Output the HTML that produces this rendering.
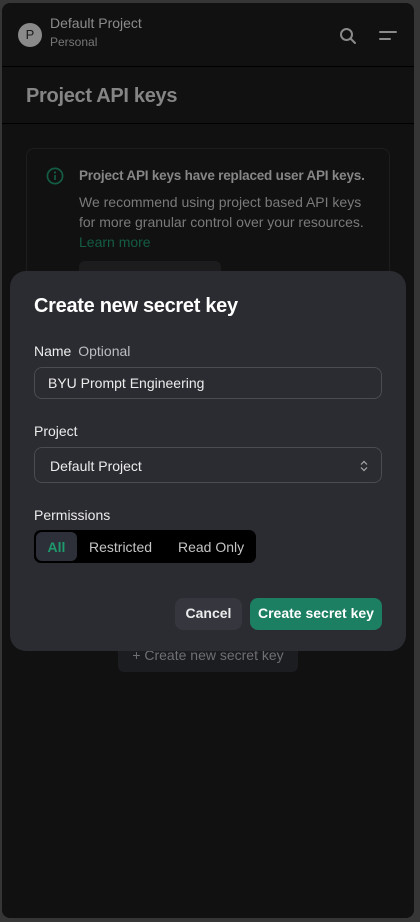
<!DOCTYPE html>
<html><head><style>
*{box-sizing:border-box;margin:0;padding:0}
body{width:420px;height:922px;background:#363636;font-family:"Liberation Sans",sans-serif;position:relative;overflow:hidden}
.panel{position:absolute;left:2px;top:3px;width:412px;height:915px;background:#111112;border-radius:8px;overflow:hidden}
.abs{position:absolute}
</style></head><body>
<div class="panel">
  <div class="abs" style="left:16px;top:20px;width:24px;height:24px;border-radius:50%;background:#8a8a8a;color:#1a1a1a;font-size:13px;text-align:center;line-height:24px">P</div>
  <div class="abs" style="left:48px;top:12px;color:#8c8c8c;font-size:14px">Default Project</div>
  <div class="abs" style="left:48px;top:32px;color:#777;font-size:12px">Personal</div>
  <svg class="abs" style="left:337px;top:24px" width="18" height="18" viewBox="0 0 18 18"><circle cx="7.5" cy="7.5" r="5.5" fill="none" stroke="#8a8a8a" stroke-width="2"/><path d="M11.5 11.5L16 16" stroke="#8a8a8a" stroke-width="2" stroke-linecap="round"/></svg>
  <svg class="abs" style="left:377px;top:26px" width="18" height="14" viewBox="0 0 18 14"><path d="M1 3H17M1 10H11" stroke="#8a8a8a" stroke-width="2" stroke-linecap="round"/></svg>
  <div class="abs" style="left:0;top:63px;width:412px;height:1px;background:#000"></div>
  <div class="abs" style="left:24px;top:82px;color:#858585;font-size:20px;font-weight:bold;letter-spacing:-0.3px">Project API keys</div>
  <div class="abs" style="left:0;top:120px;width:412px;height:1px;background:#000"></div>
  <div class="abs" style="left:24px;top:145px;width:364px;height:140px;border:1px solid #1e1e1e;border-radius:8px"></div>
  <svg class="abs" style="left:44px;top:164px" width="18" height="18" viewBox="0 0 18 18"><circle cx="9" cy="9" r="7.6" fill="none" stroke="#145c43" stroke-width="1.7"/><path d="M9 8v5" stroke="#145c43" stroke-width="1.7"/><circle cx="9" cy="5.5" r="1.1" fill="#145c43"/></svg>
  <div class="abs" style="left:77px;top:165px;color:#868686;font-size:13.5px;font-weight:bold;letter-spacing:-0.2px">Project API keys have replaced user API keys.</div>
  <div class="abs" style="left:77px;top:189px;color:#7a7a7a;font-size:14px;line-height:20px;width:300px">We recommend using project based API keys for more granular control over your resources.<br><span style="color:#145c43">Learn more</span></div>
  <div class="abs" style="left:77px;top:258px;width:142px;height:20px;background:#1c1c1f;border-radius:6px"></div>
  <div class="abs" style="left:116px;top:637px;width:180px;height:32px;background:#1c1d21;border-radius:6px;color:#6f6f74;font-size:14px;line-height:30px;text-align:center">+ Create new secret key</div>
  <div class="abs" style="left:8px;top:268px;width:396px;height:380px;background:#2b2c31;border-radius:16px">
    <div class="abs" style="left:24px;top:24px;color:#fff;font-size:20px;font-weight:bold;letter-spacing:-0.3px">Create new secret key</div>
    <div class="abs" style="left:24px;top:72px;color:#ececec;font-size:14px">Name <span style="color:#bdbdc2;margin-left:3px">Optional</span></div>
    <div class="abs" style="left:24px;top:96px;width:348px;height:32px;border:1px solid #4a4b53;border-radius:8px;color:#ececec;font-size:14px;line-height:30px;padding-left:13px">BYU Prompt Engineering</div>
    <div class="abs" style="left:24px;top:152px;color:#ececec;font-size:14px">Project</div>
    <div class="abs" style="left:24px;top:176px;width:348px;height:36px;border:1px solid #4a4b53;border-radius:8px;color:#ececec;font-size:14px;line-height:36px;padding-left:15px">Default Project
      <svg class="abs" style="right:13px;top:12px" width="8" height="12" viewBox="0 0 8 12"><path d="M1 4.5L4 1.5L7 4.5M1 7.5L4 10.5L7 7.5" fill="none" stroke="#aaa" stroke-width="1.2"/></svg></div>
    <div class="abs" style="left:24px;top:236px;color:#ececec;font-size:14px">Permissions</div>
    <div class="abs" style="left:24px;top:259px;width:222px;height:33px;background:#000;border-radius:7px">
      <div class="abs" style="left:2px;top:2px;width:41px;height:29px;background:#2d3039;border-radius:6px;color:#1e9a6c;font-size:14px;font-weight:600;text-align:center;line-height:30px">All</div>
      <div class="abs" style="left:55px;top:9px;color:#c5c5c8;font-size:14px">Restricted</div>
      <div class="abs" style="left:144px;top:9px;color:#c5c5c8;font-size:14px">Read Only</div>
    </div>
    <div class="abs" style="left:165px;top:327px;width:67px;height:32px;background:#35363e;border-radius:8px;color:#ececec;font-size:14px;font-weight:600;text-align:center;line-height:30px">Cancel</div>
    <div class="abs" style="left:240px;top:327px;width:132px;height:32px;background:#1d7f62;border-radius:8px;color:#fff;font-size:14px;font-weight:600;text-align:center;line-height:30px">Create secret key</div>
  </div>
</div>
</body></html>
